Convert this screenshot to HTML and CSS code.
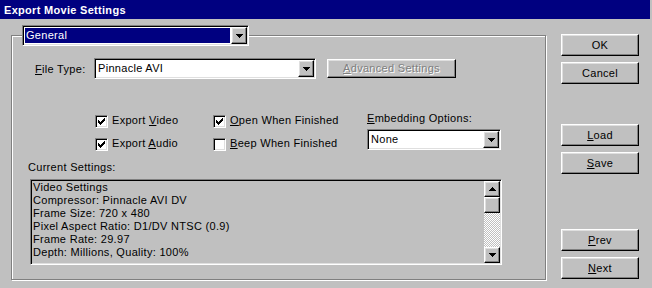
FILE: index.html
```html
<!DOCTYPE html>
<html lang="en">
<head>
  <meta charset="UTF-8">
  <title>Export Movie Settings</title>
  <link rel="stylesheet" href="styles.css">
</head>
<body>
  <div class="window">
    <div class="titlebar">Export Movie Settings</div>

    <div class="main">
      <div class="group">
        <div class="combo sunken group-head">
          <span class="combo-value focused"><span class="combo-sel">General</span></span>
          <span class="raised drop-btn"><svg width="7" height="4"><path d="M0 0h7v1H0zM1 1h5v1H1zM2 2h3v1H2zM3 3h1v1H3z"/></svg></span>
        </div>

        <div class="file-row">
          <span class="file-label"><u>F</u>ile Type:</span>
          <div class="combo sunken file-combo">
            <span class="combo-value">Pinnacle AVI</span>
            <span class="raised drop-btn"><svg width="7" height="4"><path d="M0 0h7v1H0zM1 1h5v1H1zM2 2h3v1H2zM3 3h1v1H3z"/></svg></span>
          </div>
          <span class="raised btn btn-disabled advanced"><u>A</u>dvanced Settings</span>
        </div>

        <div class="options">
          <div class="opt-col col-export">
            <div class="check-row">
              <span class="sunken checkbox"><svg width="7" height="7"><path d="M6 0h1v1H6zM5 1h2v1H5zM0 2h1v1H0zM4 2h3v1H4zM0 3h2v1H0zM3 3h3v1H3zM0 4h5v1H0zM1 5h3v1H1zM2 6h1v1H2z"/></svg></span>
              <span class="check-label">Export <u>V</u>ideo</span>
            </div>
            <div class="check-row">
              <span class="sunken checkbox"><svg width="7" height="7"><path d="M6 0h1v1H6zM5 1h2v1H5zM0 2h1v1H0zM4 2h3v1H4zM0 3h2v1H0zM3 3h3v1H3zM0 4h5v1H0zM1 5h3v1H1zM2 6h1v1H2z"/></svg></span>
              <span class="check-label">Export <u>A</u>udio</span>
            </div>
          </div>
          <div class="opt-col col-finish">
            <div class="check-row">
              <span class="sunken checkbox"><svg width="7" height="7"><path d="M6 0h1v1H6zM5 1h2v1H5zM0 2h1v1H0zM4 2h3v1H4zM0 3h2v1H0zM3 3h3v1H3zM0 4h5v1H0zM1 5h3v1H1zM2 6h1v1H2z"/></svg></span>
              <span class="check-label"><u>O</u>pen When Finished</span>
            </div>
            <div class="check-row">
              <span class="sunken checkbox"></span>
              <span class="check-label"><u>B</u>eep When Finished</span>
            </div>
          </div>
          <div class="opt-col col-embed">
            <span class="embed-label"><u>E</u>mbedding Options:</span>
            <div class="combo sunken embed-combo">
              <span class="combo-value">None</span>
              <span class="raised drop-btn"><svg width="7" height="4"><path d="M0 0h7v1H0zM1 1h5v1H1zM2 2h3v1H2zM3 3h1v1H3z"/></svg></span>
            </div>
          </div>
        </div>

        <div class="settings-label">Current Settings:</div>
        <div class="sunken settings-box">
          <div class="settings-text">Video Settings
Compressor: Pinnacle AVI DV
Frame Size: 720 x 480
Pixel Aspect Ratio: D1/DV NTSC (0.9)
Frame Rate: 29.97
Depth: Millions, Quality: 100%</div>
          <div class="scrollbar">
            <span class="raised scroll-btn"><svg width="7" height="4"><path d="M3 0h1v1H3zM2 1h3v1H2zM1 2h5v1H1zM0 3h7v1H0z"/></svg></span>
            <span class="raised scroll-thumb"></span>
            <span class="scroll-track"></span>
            <span class="raised scroll-btn"><svg width="7" height="4"><path d="M0 0h7v1H0zM1 1h5v1H1zM2 2h3v1H2zM3 3h1v1H3z"/></svg></span>
          </div>
        </div>
      </div>

      <div class="actions">
        <div class="btn-group first">
          <span class="raised btn action">OK</span>
          <span class="raised btn action">Cancel</span>
        </div>
        <div class="btn-group second">
          <span class="raised btn action"><u>L</u>oad</span>
          <span class="raised btn action"><u>S</u>ave</span>
        </div>
        <div class="btn-group third">
          <span class="raised btn action"><u>P</u>rev</span>
          <span class="raised btn action"><u>N</u>ext</span>
        </div>
      </div>
    </div>
  </div>
</body>
</html>
```

FILE: styles.css
```css
body {
  margin: 0;
  background: #c0c0c0;
  font-family: "Liberation Sans", Arial, sans-serif;
  font-size: 11px;
  line-height: 13px;
  letter-spacing: 0.3px;
  color: #000;
}
u {
  text-decoration-thickness: 1px;
  text-underline-offset: 1px;
}
.window {
  width: 652px;
  height: 288px;
  overflow: hidden;
}
.titlebar {
  width: 650px;
  height: 19px;
  box-sizing: border-box;
  padding: 1px 0 0 4px;
  line-height: 18px;
  background: #000080;
  color: #fff;
  font-weight: bold;
}
.main {
  display: flex;
  padding-left: 11px;
}

/* 3d borders */
.sunken {
  box-sizing: border-box;
  border: 1px solid;
  border-color: #808080 #fff #fff #808080;
  box-shadow: inset 1px 1px 0 #000, inset -1px -1px 0 #dfdfdf;
  padding: 1px;
}
.raised {
  box-sizing: border-box;
  border: 1px solid;
  border-color: #fff #000 #000 #fff;
  box-shadow: inset -1px -1px 0 #808080, inset 1px 1px 0 #dfdfdf;
  background: #c0c0c0;
}

/* group box */
.group {
  margin-top: 16px;
  width: 535px;
  height: 245px;
  box-sizing: border-box;
  border: 1px solid #808080;
  box-shadow: 1px 1px 0 #fff, inset 1px 1px 0 #fff;
}

/* combos */
.combo {
  display: flex;
  height: 21px;
  background: #fff;
}
.combo-value {
  flex: 1;
  padding-left: 2px;
  line-height: 17px;
  white-space: nowrap;
}
.combo-value.focused {
  padding: 1px;
  line-height: 15px;
}
.combo-sel {
  display: block;
  height: 15px;
  padding-left: 1px;
  background: #000080;
  color: #fff;
}
.drop-btn,
.scroll-btn {
  display: flex;
  align-items: center;
  justify-content: center;
  width: 16px;
  flex: none;
}
.drop-btn {
  height: 17px;
}
.group-head {
  margin: -11px 0 0 10px;
  width: 227px;
}

/* file type row */
.file-row {
  display: flex;
  align-items: center;
  margin-top: 12px;
  padding-left: 23px;
}
.file-label {
  width: 59px;
  padding-top: 2px;
}
.file-combo {
  width: 222px;
}
.btn {
  display: flex;
  align-items: center;
  justify-content: center;
  white-space: nowrap;
}
.advanced {
  width: 129px;
  height: 19px;
  margin-left: 11px;
}
.btn-disabled {
  color: #808080;
  text-shadow: 1px 1px 0 #fff;
}

/* options */
.options {
  display: flex;
  margin: 33px 0 0 83px;
}
.opt-col {
  display: flex;
  flex-direction: column;
}
.col-export,
.col-finish {
  padding-top: 3px;
  gap: 10px;
}
.col-export {
  width: 118px;
}
.col-finish {
  width: 154px;
}
.col-embed {
  width: 134px;
}
.check-row {
  display: flex;
  height: 13px;
}
.checkbox {
  width: 13px;
  height: 13px;
  background: #fff;
  flex: none;
}
.checkbox svg {
  display: block;
  margin: 1px 0 0 1px;
}
.check-label {
  margin: -1px 0 0 4px;
  white-space: nowrap;
}
.embed-label {
  white-space: nowrap;
}
.embed-combo {
  margin-top: 4px;
}

/* current settings */
.settings-label {
  margin: 10px 0 0 16px;
}
.settings-box {
  display: flex;
  margin: 5px 0 0 18px;
  width: 472px;
  height: 86px;
  padding: 1px;
}
.settings-text {
  flex: 1;
  white-space: pre;
  padding-left: 1px;
}
.scrollbar {
  display: flex;
  flex-direction: column;
  width: 16px;
}
.scroll-btn {
  height: 16px;
}
.scroll-thumb {
  height: 16px;
}
.scroll-track {
  flex: 1;
  background-image: conic-gradient(#fff 25%, #c0c0c0 0 50%, #fff 0 75%, #c0c0c0 0);
  background-size: 2px 2px;
}
svg {
  display: block;
  shape-rendering: crispEdges;
}

/* right buttons */
.actions {
  margin-left: 15px;
  display: flex;
  flex-direction: column;
}
.btn-group {
  display: flex;
  flex-direction: column;
  gap: 6px;
}
.btn-group.first {
  margin-top: 15px;
}
.btn-group.second {
  margin-top: 40px;
}
.btn-group.third {
  margin-top: 55px;
}
.action {
  width: 78px;
  height: 22px;
}
```
